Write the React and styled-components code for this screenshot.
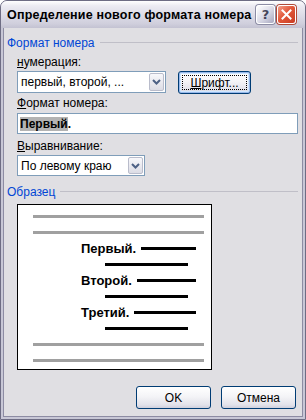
import React from 'react';
import styled, { createGlobalStyle } from 'styled-components';

const GlobalStyle = createGlobalStyle`
    html, body {
        margin: 0;
        padding: 0;
        background: #ffffff;
    }
    body {
        font-family: "Liberation Sans", Arial, sans-serif;
        font-size: 12px;
        color: #000;
    }
`;

const Window = styled.div`
    width: 306px;
    height: 420px;
    box-sizing: border-box;
    display: flex;
    flex-direction: column;
    background: #c8c7d6;
    border: 1px solid #6e6d84;
    border-radius: 7px 7px 0 0;
    overflow: hidden;
`;

const TitleBar = styled.div`
    height: 27px;
    flex-shrink: 0;
    display: flex;
    align-items: center;
    padding: 0 9px 0 6px;
    background: linear-gradient(#ffffff 0%, #ecebf2 18%, #dcdbe6 55%, #cfcedc 85%, #c3c2d2 100%);
`;

const Title = styled.div`
    flex: 1;
    min-width: 0;
    font-family: "Liberation Sans", Arial, sans-serif;
    font-weight: bold;
    font-size: 12.5px;
    color: #000;
    white-space: nowrap;
    overflow: hidden;
    letter-spacing: 0.2px;
`;

const Controls = styled.div`
    display: flex;
    gap: 2px;
    flex-shrink: 0;
`;

const CaptionButton = styled.div`
    width: 17px;
    height: 17px;
    border-radius: 3px;
    border: 1px solid #ffffff;
    box-shadow: 0 0 0 1px ${props => props.close ? '#b04a39' : '#8c8ca4'};
    display: flex;
    align-items: center;
    justify-content: center;
    background: ${props => props.close
        ? 'linear-gradient(135deg, #f3a08c 0%, #e2583a 45%, #c93b23 100%)'
        : 'linear-gradient(135deg, #ffffff 0%, #dcdce8 50%, #a8a8c0 100%)'};
    color: ${props => props.close ? '#fff' : '#45455a'};
    font-family: "DejaVu Sans", sans-serif;
    font-weight: bold;
    font-size: 13px;
`;

const Client = styled.div`
    flex: 1;
    margin: 0 2px 2px 2px;
    background: #e0dfe3;
    border: 1px solid #8d8ca3;
    border-top: none;
    padding: 8px 4px 0 3px;
    display: flex;
    flex-direction: column;
`;

const GroupHeader = styled.div`
    display: flex;
    align-items: center;
    height: 13px;
    margin-top: ${props => props.top || 0}px;
    color: #0046d5;
    &::after {
        content: '';
        flex: 1;
        height: 1px;
        margin-left: 5px;
        background: #c0bfc8;
    }
`;

const GroupBody = styled.div`
    padding-left: 10px;
    display: flex;
    flex-direction: column;
`;

const Label = styled.div`
    height: 13px;
    line-height: 13px;
    margin-top: ${props => props.top || 0}px;
    white-space: nowrap;
`;

const Key = styled.span`
    text-decoration: underline;
`;

const Row = styled.div`
    display: flex;
    align-items: flex-start;
    gap: 12px;
    margin-top: ${props => props.top || 0}px;
`;

const Combo = styled.div`
    width: ${props => props.width}px;
    height: ${props => props.height}px;
    box-sizing: border-box;
    border: 1px solid #7f9db9;
    background: #fff;
    display: flex;
    align-items: stretch;
`;

const ComboText = styled.div`
    flex: 1;
    padding-left: 3px;
    display: flex;
    align-items: center;
    white-space: nowrap;
    overflow: hidden;
`;

const ComboArrow = styled.div`
    width: 15px;
    margin: 1px;
    box-sizing: border-box;
    border: 1px solid #b9bccb;
    border-radius: 2px;
    background: linear-gradient(#f8f8fb, #dcdce5);
    display: flex;
    align-items: center;
    justify-content: center;
`;

const Button = styled.div`
    width: ${props => props.width || 75}px;
    height: 23px;
    box-sizing: border-box;
    border: 1px solid #003c74;
    border-radius: 3px;
    background: linear-gradient(#ffffff 0%, #f4f4f7 45%, #e2e2ea 85%, #cfcfdc 100%);
    box-shadow: ${props => props.focused ? 'inset 0 0 0 1px #98b8ea, inset 0 0 0 2px #cee7ff' : 'none'};
    display: flex;
    align-items: center;
    justify-content: center;
    white-space: nowrap;
`;

const FocusRect = styled.span`
    display: flex;
    align-items: center;
    justify-content: center;
    width: calc(100% - 8px);
    height: calc(100% - 8px);
    outline: 1px dotted #000;
`;

const TextInput = styled.div`
    height: 21px;
    box-sizing: border-box;
    margin-top: 3px;
    border: 1px solid #7f9db9;
    background: #fff;
    display: flex;
    align-items: center;
    padding-left: 2px;
    font-weight: bold;
`;

const Selected = styled.span`
    background: #b3b3b3;
`;

const Preview = styled.div`
    width: 195px;
    height: 166px;
    box-sizing: border-box;
    margin-top: 6px;
    border: 1px solid #000;
    background: #fff;
    padding: 3px 0 0 15px;
    display: flex;
    flex-direction: column;
`;

const PreviewRow = styled.div`
    height: 16px;
    display: flex;
    align-items: center;
    padding-left: ${props => props.indent || 0}px;
    width: 171px;
    box-sizing: border-box;
`;

const Bar = styled.div`
    height: 3px;
    flex: ${props => props.fixed ? 'none' : 1};
    width: ${props => props.fixed ? props.fixed + 'px' : 'auto'};
    margin-left: ${props => props.gap || 0}px;
    margin-right: ${props => props.right || 0}px;
    background: ${props => props.grey ? '#a0a0a0' : '#000'};
`;

const Num = styled.span`
    font-weight: bold;
    font-size: 13px;
    white-space: nowrap;
`;

const Footer = styled.div`
    display: flex;
    justify-content: flex-end;
    gap: 10px;
    margin-top: 16px;
    padding-right: 2px;
`;

const Chevron = () => (
    <svg width="9" height="6" viewBox="0 0 9 6">
        <path d="M1 1 L4.5 4.5 L8 1" fill="none" stroke="#4d6185" strokeWidth="2" />
    </svg>
);

const Cross = () => (
    <svg width="11" height="11" viewBox="0 0 11 11">
        <path d="M1.5 1.5 L9.5 9.5 M9.5 1.5 L1.5 9.5" stroke="#fff" strokeWidth="2" strokeLinecap="square" />
    </svg>
);

const items = ['Первый.', 'Второй.', 'Третий.'];

const App = () => {
    return (
        <>
            <GlobalStyle />
            <Window>
                <TitleBar>
                    <Title>Определение нового формата номера</Title>
                    <Controls>
                        <CaptionButton>?</CaptionButton>
                        <CaptionButton close><Cross /></CaptionButton>
                    </Controls>
                </TitleBar>
                <Client>
                    <GroupHeader>Формат номера</GroupHeader>
                    <GroupBody>
                        <Label top={7}><Key>н</Key>умерация:</Label>
                        <Row top={2}>
                            <Combo width={149} height={22}>
                                <ComboText>первый, второй, ...</ComboText>
                                <ComboArrow><Chevron /></ComboArrow>
                            </Combo>
                            <Button width={73} focused>
                                <FocusRect><Key>Ш</Key>рифт...</FocusRect>
                            </Button>
                        </Row>
                        <Label top={3}><Key>Ф</Key>ормат номера:</Label>
                        <TextInput><Selected>Первый</Selected>.</TextInput>
                        <Label top={6}><Key>В</Key>ыравнивание:</Label>
                        <Row top={2}>
                            <Combo width={128} height={21}>
                                <ComboText>По левому краю</ComboText>
                                <ComboArrow><Chevron /></ComboArrow>
                            </Combo>
                        </Row>
                    </GroupBody>
                    <GroupHeader top={9}>Образец</GroupHeader>
                    <GroupBody>
                        <Preview>
                            <PreviewRow><Bar grey /></PreviewRow>
                            <PreviewRow><Bar grey /></PreviewRow>
                            {items.map(item => (
                                <React.Fragment key={item}>
                                    <PreviewRow indent={48}>
                                        <Num>{item}</Num>
                                        <Bar gap={5} right={8} />
                                    </PreviewRow>
                                    <PreviewRow indent={72}>
                                        <Bar fixed={83} />
                                    </PreviewRow>
                                </React.Fragment>
                            ))}
                            <PreviewRow><Bar grey /></PreviewRow>
                            <PreviewRow><Bar grey /></PreviewRow>
                        </Preview>
                    </GroupBody>
                    <Footer>
                        <Button>OK</Button>
                        <Button>Отмена</Button>
                    </Footer>
                </Client>
            </Window>
        </>
    );
};

export default App;
